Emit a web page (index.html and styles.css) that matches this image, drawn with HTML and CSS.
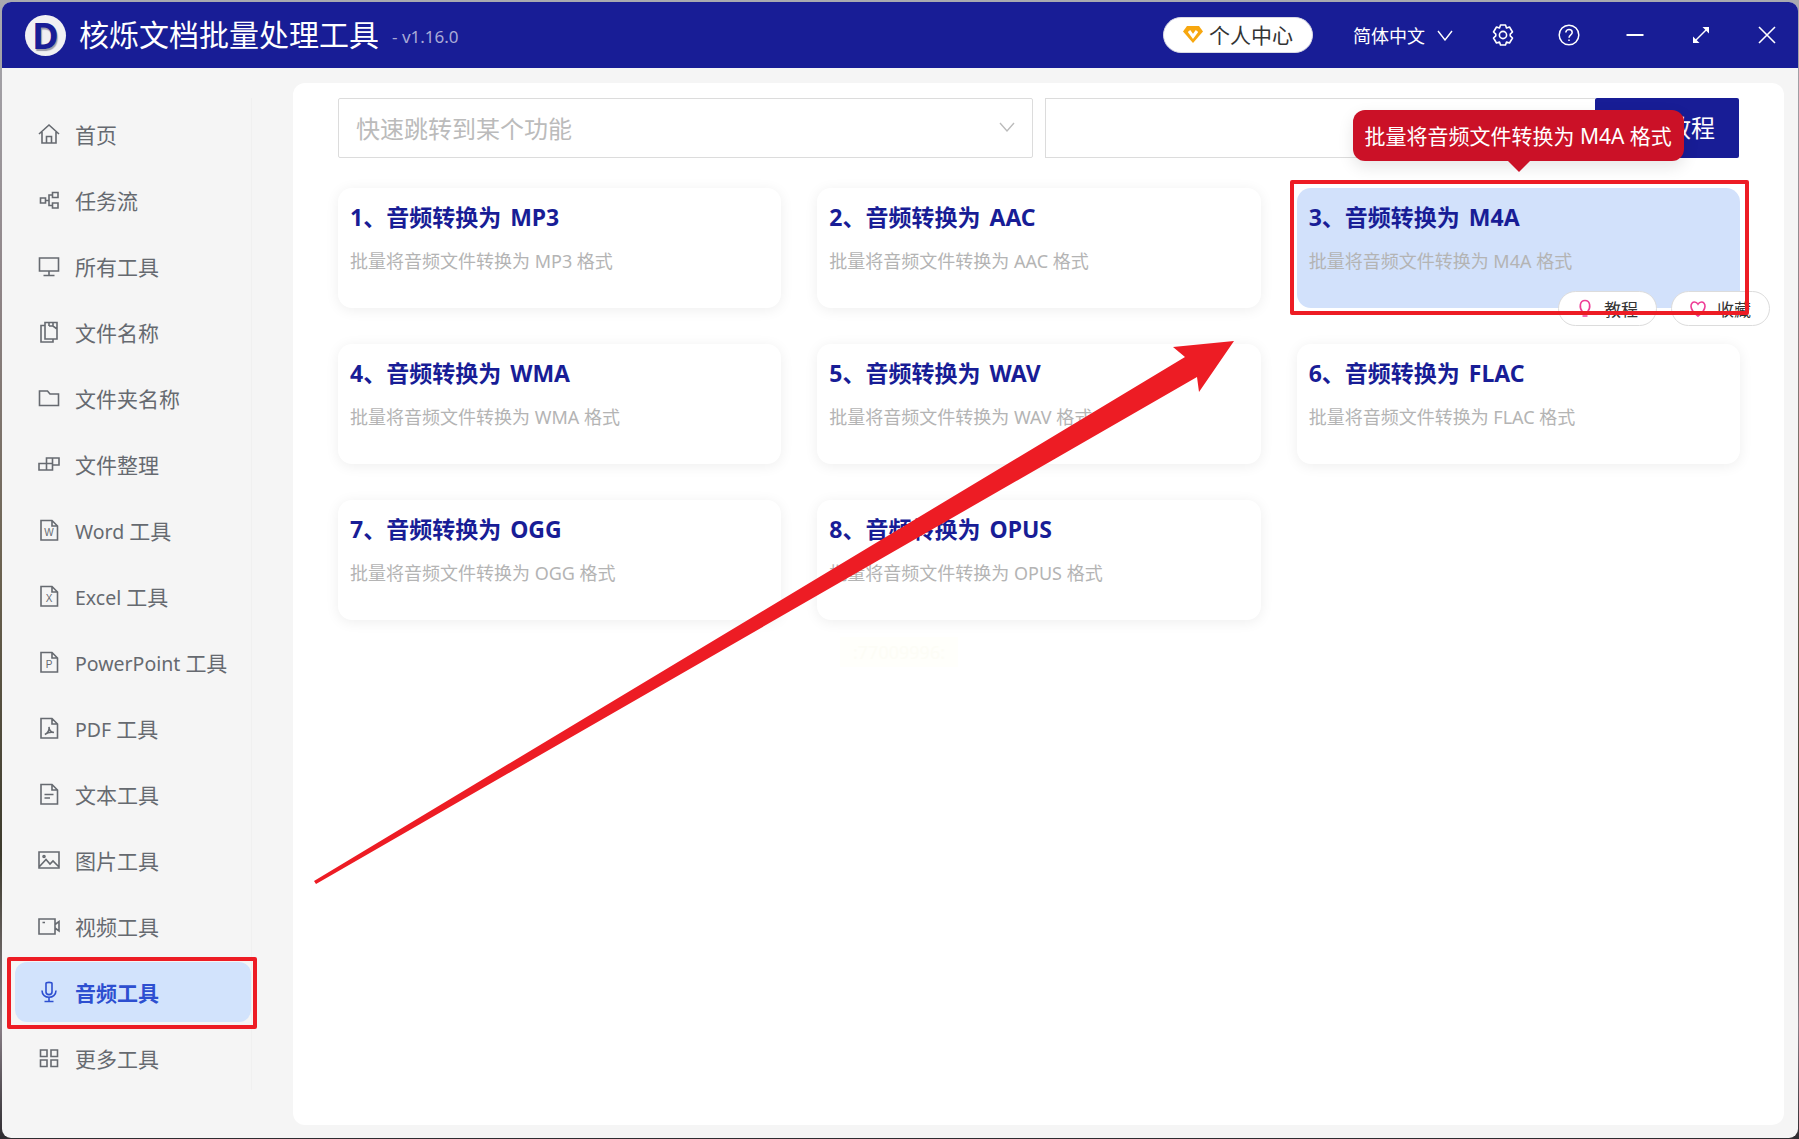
FILE: index.html
```html
<!DOCTYPE html>
<html lang="zh-CN">
<head>
  <meta charset="UTF-8">
  <title>核烁文档批量处理工具</title>
  <link rel="stylesheet" href="styles.css">
</head>
<body>
  <div class="window">
    <div class="topbar">
      <div class="logo">D</div>
      <div class="app-name">核烁文档批量处理工具</div>
      <div class="version">- v1.16.0</div>

      <div class="user-pill">
        <svg width="22" height="22" viewBox="0 0 22 22"><path d="M5 3H17L21 8.500L11 20L1 8.500Z" fill="#f7a70f"/><path d="M7 8L11 13.500L15 8" fill="none" stroke="#fff" stroke-width="3"/></svg>
        <span>个人中心</span>
      </div>
      <div class="lang">
        <span>简体中文</span>
        <svg width="16" height="12" viewBox="0 0 16 12"><path d="M1 2L8 11L15 2" fill="none" stroke="#fff" stroke-width="1.4"/></svg>
      </div>
      <div class="win-btns">
        <svg width="22" height="24" viewBox="0 0 22 24" fill="none" stroke="#fff" stroke-width="1.6"><path d="M8.500 2H13.500L14.500 5L17.500 4L20.500 9L18.200 11.200V12.800L20.500 15L17.500 20L14.500 19L13.500 22H8.500L7.500 19L4.500 20L1.500 15L3.800 12.800V11.200L1.500 9L4.500 4L7.500 5Z" stroke-linejoin="round"/><circle cx="11" cy="12" r="3.600"/></svg>
        <svg width="22" height="22" viewBox="0 0 22 22" fill="none" stroke="#fff" stroke-width="1.500"><circle cx="11" cy="11" r="9.800"/><path d="M7.800 8.600C7.800 4.600 14.200 4.600 14.200 8.600C14.200 11 11 10.800 11 13.800"/><path d="M11 15.400V17"/></svg>
        <svg width="22" height="22" viewBox="0 0 22 22"><path d="M2.500 11H19.500" stroke="#fff" stroke-width="2"/></svg>
        <svg width="22" height="22" viewBox="0 0 22 22" fill="none" stroke="#fff" stroke-width="1.500"><path d="M4 18L18 4"/><path d="M12.500 3H19V9.500Z" fill="#fff" stroke="none"/><path d="M3 12.500V19H9.500Z" fill="#fff" stroke="none"/></svg>
        <svg width="22" height="22" viewBox="0 0 22 22"><path d="M3 3L19 19M19 3L3 19" stroke="#fff" stroke-width="1.600"/></svg>
      </div>
    </div>

    <div class="content">
      <div class="sidebar">
        <div class="nav-item">
          <svg class="nav-icon" viewBox="0 0 22 22"><path d="M1 11L11 2L21 11M4 9V20H18V9M8.500 20V13.500H13.500V20"/></svg>
          <span>首页</span>
        </div>
        <div class="nav-item">
          <svg class="nav-icon" viewBox="0 0 22 22"><path d="M2.500 9H7.500V14H2.500ZM14.500 3.500H20V8.500H14.500ZM14.500 14H20V19H14.500ZM7.500 11.500H11M14.500 6H11V16.500H14.500"/></svg>
          <span>任务流</span>
        </div>
        <div class="nav-item">
          <svg class="nav-icon" viewBox="0 0 22 22"><path d="M1.500 3H20.500V16H1.500ZM11 16V20M5.500 20.500H16.500"/></svg>
          <span>所有工具</span>
        </div>
        <div class="nav-item">
          <svg class="nav-icon" viewBox="0 0 22 22"><path d="M7 4.500H3V21H15V18M7 1.500H19V18H7ZM11 1.500V5M15 1.500V5M11 5H15L19 8"/></svg>
          <span>文件名称</span>
        </div>
        <div class="nav-item">
          <svg class="nav-icon" viewBox="0 0 22 22"><path d="M1.500 4H9.500L12 7H20.500V18.500H1.500Z"/></svg>
          <span>文件夹名称</span>
        </div>
        <div class="nav-item">
          <svg class="nav-icon" viewBox="0 0 22 22"><path d="M8.500 5H21V12H14.500V17H1V10.500H8.500ZM8.500 10.500H14.500V12M8.500 10.500V17M14.500 5V12"/></svg>
          <span>文件整理</span>
        </div>
        <div class="nav-item">
          <svg class="nav-icon" viewBox="0 0 22 22"><path d="M3 1.500H14L19.500 7V21H3ZM14 1.500V7H19.500"/><text class="doc-letter" x="11" y="17">W</text></svg>
          <span><span class="latin">Word </span>工具</span>
        </div>
        <div class="nav-item">
          <svg class="nav-icon" viewBox="0 0 22 22"><path d="M3 1.500H14L19.500 7V21H3ZM14 1.500V7H19.500"/><text class="doc-letter" x="11" y="17">X</text></svg>
          <span><span class="latin">Excel </span>工具</span>
        </div>
        <div class="nav-item">
          <svg class="nav-icon" viewBox="0 0 22 22"><path d="M3 1.500H14L19.500 7V21H3ZM14 1.500V7H19.500"/><text class="doc-letter" x="11" y="17">P</text></svg>
          <span><span class="latin">PowerPoint </span>工具</span>
        </div>
        <div class="nav-item">
          <svg class="nav-icon" viewBox="0 0 22 22"><path d="M3 1.500H14L19.500 7V21H3ZM14 1.500V7H19.500M7 17.500C10 15.500 11.500 12.500 11 10C11 13 13 15 16 15.500C13 15 9.500 15.500 7 17.500Z"/></svg>
          <span><span class="latin">PDF </span>工具</span>
        </div>
        <div class="nav-item">
          <svg class="nav-icon" viewBox="0 0 22 22"><path d="M3 1.500H14L19.500 7V21H3ZM14 1.500V7H19.500M6.500 11.500H15.500M6.500 15H12"/></svg>
          <span>文本工具</span>
        </div>
        <div class="nav-item">
          <svg class="nav-icon" viewBox="0 0 22 22"><path d="M1 3H21V19H1ZM1.500 17.500L8 10.500L12 15L15 12L20.500 17.500"/><circle cx="6" cy="7.500" r="1"/></svg>
          <span>图片工具</span>
        </div>
        <div class="nav-item">
          <svg class="nav-icon" viewBox="0 0 22 22"><path d="M1 4H17V19H1ZM17 9.500L21 6.500V16L17 13M4.500 7.500H7"/></svg>
          <span>视频工具</span>
        </div>
        <div class="nav-item active">
          <svg class="nav-icon" viewBox="0 0 22 22"><path d="M8 2.500C8 1 14 1 14 2.500V11C14 14.500 8 14.500 8 11ZM4 9.500C4 18.500 18 18.500 18 9.500M11 16.500V20.500M6.500 20.500H15.500"/></svg>
          <span>音频工具</span>
          <div class="mark-nav"></div>
        </div>
        <div class="nav-item">
          <svg class="nav-icon" viewBox="0 0 22 22"><path d="M2.500 3H9V9.500H2.500ZM13 3H19.500V9.500H13ZM2.500 13H9V19.500H2.500ZM13 13H19.500V19.500H13Z"/></svg>
          <span>更多工具</span>
        </div>
      </div>

      <div class="main">
        <div class="toolbar">
          <div class="jump-select">
            <span>快速跳转到某个功能</span>
            <svg width="16" height="12" viewBox="0 0 16 12"><path d="M1 2L8 10L15 2" fill="none" stroke="#bbb" stroke-width="1.400"/></svg>
          </div>
          <div class="search-box"></div>
          <div class="tutorial-btn">使用教程</div>
        </div>

        <div class="cards">
          <div class="card">
            <div class="card-title">1、音频转换为 MP3</div>
            <div class="card-desc">批量将音频文件转换为 MP3 格式</div>
          </div>
          <div class="card">
            <div class="card-title">2、音频转换为 AAC</div>
            <div class="card-desc">批量将音频文件转换为 AAC 格式</div>
          </div>
          <div class="card selected">
            <div class="card-title">3、音频转换为 M4A</div>
            <div class="card-desc">批量将音频文件转换为 M4A 格式</div>
            <div class="tooltip">批量将音频文件转换为 M4A 格式</div>
            <div class="card-actions">
              <div class="pill">
                <svg width="18" height="20" viewBox="0 0 18 20" fill="none" stroke="#ee3d96" stroke-width="1.600"><path d="M9 1.500C3.500 1.500 3 8.500 6.500 13H11.500C15 8.500 14.500 1.500 9 1.500ZM6.500 17H11.500"/></svg>
                <span>教程</span>
              </div>
              <div class="pill">
                <svg width="18" height="18" viewBox="0 0 18 18" fill="none" stroke="#ee3d96" stroke-width="1.600"><path d="M9 16C-1 9 1.500 2 5.500 2C7 2 8.300 3 9 4.200C9.700 3 11 2 12.500 2C16.500 2 19 9 9 16Z"/></svg>
                <span>收藏</span>
              </div>
            </div>
            <div class="mark-card"></div>
          </div>
          <div class="card">
            <div class="card-title">4、音频转换为 WMA</div>
            <div class="card-desc">批量将音频文件转换为 WMA 格式</div>
          </div>
          <div class="card">
            <div class="card-title">5、音频转换为 WAV</div>
            <div class="card-desc">批量将音频文件转换为 WAV 格式</div>
          </div>
          <div class="card">
            <div class="card-title">6、音频转换为 FLAC</div>
            <div class="card-desc">批量将音频文件转换为 FLAC 格式</div>
          </div>
          <div class="card">
            <div class="card-title">7、音频转换为 OGG</div>
            <div class="card-desc">批量将音频文件转换为 OGG 格式</div>
          </div>
          <div class="card">
            <div class="card-title">8、音频转换为 OPUS</div>
            <div class="card-desc">批量将音频文件转换为 OPUS 格式</div>
          </div>
        </div>

        <div class="faint-chip">:77009996:</div>
      </div>
    </div>
  </div>

  <svg class="arrow" width="1799" height="1139" viewBox="0 0 1799 1139">
    <path d="M314 881L1185 357L1173 347L1234 341L1199 392L1197 377L316 884Z" fill="#ed1c24"/>
  </svg>
</body>
</html>
```

FILE: styles.css
```css
* {
  box-sizing: border-box;
}
html, body {
  margin: 0;
  padding: 0;
}
body {
  width: 1799px;
  height: 1139px;
  position: relative;
  overflow: hidden;
  font-family: "Noto Sans", "Noto Sans CJK SC", sans-serif;
  background: linear-gradient(180deg, #a9aab0 0%, #8f8588 25%, #6b6250 50%, #3c3a2c 75%, #8a8088 90%, #2e2c30 100%);
}
.window {
  margin: 2px 1px 0 2px;
  height: 1136px;
  border-radius: 9px;
  overflow: hidden;
  background: #f5f5f5;
  display: flex;
  flex-direction: column;
}

/* title bar */
.topbar {
  height: 66px;
  flex: none;
  background: #181d96;
  display: flex;
  align-items: center;
  padding: 0 20px 0 23px;
  color: #fff;
}
.logo {
  width: 41px;
  height: 41px;
  border-radius: 50%;
  background: #f1f1f3;
  color: #181d96;
  font-size: 36px;
  line-height: 41px;
  font-weight: 700;
  text-align: center;
  text-shadow: 1px 2px 1px #9a9aa8;
}
.app-name {
  margin-left: 13px;
  font-size: 30px;
  line-height: 40px;
}
.version {
  margin-left: 13px;
  margin-top: 2px;
  font-size: 17px;
  color: #a9abd6;
}
.user-pill {
  margin-left: auto;
  width: 150px;
  height: 36px;
  border-radius: 18px;
  background: #fff;
  border: 1px solid #d8d8e4;
  color: #333;
  font-size: 21px;
  display: flex;
  align-items: center;
  gap: 5px;
  padding: 0 0 2px 18px;
}
.lang {
  margin-left: 40px;
  font-size: 18px;
  display: flex;
  align-items: center;
  gap: 12px;
}
.win-btns {
  margin-left: 39px;
  display: flex;
  align-items: center;
  gap: 44px;
}
.win-btns svg {
  display: block;
}

.content {
  flex: 1;
  display: flex;
  min-height: 0;
}

/* left menu */
.sidebar {
  width: 250px;
  flex: none;
  align-self: flex-start;
  margin-top: 30px;
  padding: 6px 0 2px 13px;
  border-right: 1px solid #f0f0f0;
}
.nav-item {
  position: relative;
  height: 60px;
  margin-bottom: 6px;
  padding-left: 23px;
  border-radius: 12px;
  display: flex;
  align-items: center;
  gap: 15px;
  font-size: 21px;
  color: #666a70;
}
.nav-item:last-child {
  margin-bottom: 0;
}
.latin {
  font-size: 19.5px;
}
.nav-icon {
  width: 22px;
  height: 22px;
  flex: none;
  fill: none;
  stroke: #666a70;
  stroke-width: 1.6;
}
.doc-letter {
  font-family: "Liberation Sans", sans-serif;
  font-size: 10px;
  text-anchor: middle;
  fill: #666a70;
  stroke: none;
}
.nav-item.active {
  background: #d2e3fc;
  color: #2d4fd0;
  font-weight: 700;
}
.nav-item.active .nav-icon {
  stroke: #2d4fd0;
}
.mark-nav {
  position: absolute;
  left: -8px;
  top: -5px;
  width: 250px;
  height: 72px;
  border: 4px solid #ed1c24;
  border-radius: 2px;
}

/* main panel */
.main {
  flex: 1;
  margin: 15px 14px 13px 41px;
  padding: 15px 44px 0 45px;
  background: #fff;
  border-radius: 12px;
}
.toolbar {
  display: flex;
  height: 60px;
}
.jump-select {
  width: 695px;
  border: 1px solid #dcdcdc;
  border-radius: 2px;
  padding: 0 17px 2px 17px;
  display: flex;
  align-items: center;
  justify-content: space-between;
  font-size: 24px;
  color: #bbb;
}
.search-box {
  flex: 1;
  margin-left: 12px;
  border: 1px solid #dcdcdc;
  border-right: none;
}
.tutorial-btn {
  width: 144px;
  margin-right: 1px;
  background: #181d96;
  color: #fff;
  font-size: 24px;
  border-radius: 2px;
  padding-bottom: 4px;
  display: flex;
  align-items: center;
  justify-content: center;
}
.cards {
  margin-top: 30px;
  display: grid;
  grid-template-columns: repeat(3, 1fr);
  grid-auto-rows: 120px;
  gap: 36px;
}
.card {
  position: relative;
  background: #fff;
  border-radius: 14px;
  padding: 11px 12px 0;
  box-shadow: 0 2px 14px rgba(0, 0, 0, 0.07);
}
.card-title {
  font-size: 23px;
  line-height: 36px;
  font-weight: 700;
  word-spacing: 3px;
  color: #181d96;
}
.card-desc {
  margin-top: 13px;
  font-size: 18px;
  line-height: 26px;
  color: #b4b4b4;
}
.card.selected {
  background: #d2e1fb;
  box-shadow: none;
}
.tooltip {
  position: absolute;
  left: 56px;
  top: -78px;
  width: 331px;
  height: 51px;
  border-radius: 12px;
  background: #cb1127;
  color: #fff;
  font-size: 21px;
  line-height: 52px;
  text-align: center;
  white-space: nowrap;
  box-shadow: 0 6px 16px rgba(0, 0, 0, 0.1);
}
.tooltip::after {
  content: "";
  position: absolute;
  left: 155px;
  top: 51px;
  border: 11px solid transparent;
  border-top-color: #cb1127;
  border-bottom: none;
}
.card-actions {
  position: absolute;
  right: -30px;
  top: 103px;
  display: flex;
  gap: 14px;
}
.pill {
  width: 99px;
  height: 35px;
  border-radius: 18px;
  background: #fff;
  border: 1px solid #dcdcdc;
  font-size: 17px;
  color: #333;
  display: flex;
  align-items: center;
  gap: 10px;
  padding-left: 17px;
}
.mark-card {
  position: absolute;
  left: -7px;
  top: -8px;
  width: 459px;
  height: 135px;
  border: 4px solid #ed1c24;
  border-radius: 2px;
}
.faint-chip {
  margin: 17px 0 0 502px;
  width: 118px;
  height: 30px;
  background: #fffffb;
  color: #fdfdf6;
  font-size: 18px;
  line-height: 30px;
  text-align: center;
}

/* big annotation arrow across the page */
.arrow {
  position: absolute;
  left: 0;
  top: 0;
  pointer-events: none;
}
```
